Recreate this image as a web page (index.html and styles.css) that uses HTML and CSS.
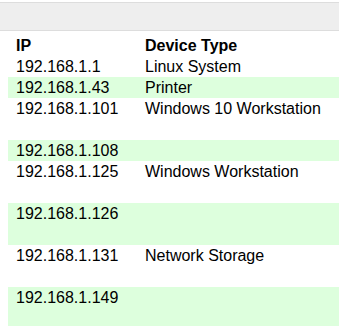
FILE: index.html
```html
<!DOCTYPE html>
<html>
<head>
  <title>Devices</title>
  <link rel="stylesheet" href="styles.css">
</head>
<body>

  <div class="toolbar"></div>

  <table class="devices">
    <tr class="head">
      <th class="ip">IP</th>
      <th>Device Type</th>
    </tr>
    <tr>
      <td>192.168.1.1</td>
      <td>Linux System</td>
    </tr>
    <tr class="alt">
      <td>192.168.1.43</td>
      <td>Printer</td>
    </tr>
    <tr class="tall">
      <td>192.168.1.101</td>
      <td>Windows 10 Workstation</td>
    </tr>
    <tr class="alt">
      <td>192.168.1.108</td>
      <td></td>
    </tr>
    <tr class="tall">
      <td>192.168.1.125</td>
      <td>Windows Workstation</td>
    </tr>
    <tr class="alt tall">
      <td>192.168.1.126</td>
      <td></td>
    </tr>
    <tr class="tall">
      <td>192.168.1.131</td>
      <td>Network Storage</td>
    </tr>
    <tr class="alt tall">
      <td>192.168.1.149</td>
      <td></td>
    </tr>
  </table>

</body>
</html>
```

FILE: styles.css
```css
body {
  margin: 0;
  font-family: "Liberation Sans", Arial, sans-serif;
  font-size: 16px;
  color: #000;
  background: #fff;
  overflow: hidden;
}

.toolbar {
  margin-top: 2px;
  height: 27px;
  background-color: #eeeeee;
  border-top: 1px solid #dddddd;
  border-bottom: 1px solid #dddddd;
}

.devices {
  margin: 4px 0 0 8px;
  width: calc(100% - 8px);
  border-collapse: collapse;
  table-layout: fixed;
}

.devices th,
.devices td {
  text-align: left;
  vertical-align: top;
  padding: 0 0 0 8px;
  line-height: 21px;
  height: 21px;
  white-space: nowrap;
}

.devices th {
  font-weight: bold;
}

.devices .ip {
  width: 121px;
}

.devices tr.tall td {
  height: 42px;
}

.devices tr.alt {
  background-color: #ddffdd;
}
```
